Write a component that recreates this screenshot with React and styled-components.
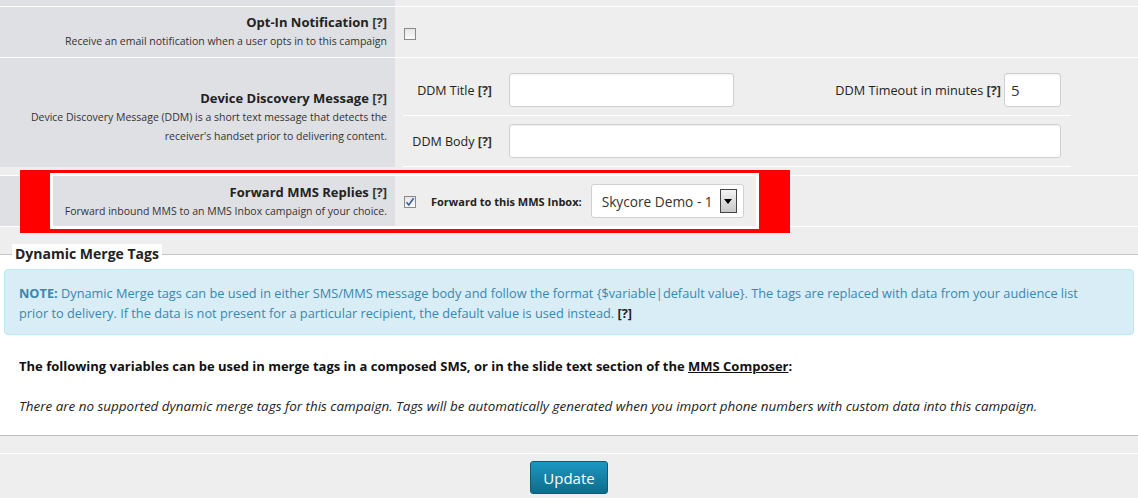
import React from "react";
import styled, { createGlobalStyle } from "styled-components";

const Global = createGlobalStyle`
  html, body { margin: 0; padding: 0; background: #eeeeee; }
  body { font-family: "Open Sans", "DejaVu Sans", sans-serif; color: #222; }
  * { box-sizing: border-box; }
`;

const Page = styled.div`
  width: 1138px;
  background: #eeeeee;
`;

const Settings = styled.div`
  display: flex;
  flex-direction: column;
`;

const Row = styled.div`
  position: relative;
  display: grid;
  grid-template-columns: 395px 1fr;
  height: ${(p) => p.$h}px;
  border-top: ${(p) => (p.$top ? "1px solid #fff" : "none")};
  border-bottom: ${(p) => (p.$bottom ? "1px solid #fff" : "none")};
`;

const LabelCell = styled.div`
  background: #dfe0e4;
  text-align: right;
  padding: ${(p) => p.$pt || 0}px 8px 0 0;
`;

const ValueCell = styled.div`
  display: flex;
  align-items: ${(p) => p.$align || "center"};
  padding-left: ${(p) => p.$pl || 9}px;
`;

const Title = styled.div`
  font-size: 13px;
  font-weight: 700;
  line-height: 20px;
  color: #222;
  white-space: nowrap;
`;

const Help = styled.span`
  font-weight: 700;
  color: #333;
`;

const Desc = styled.div`
  font-size: 10.5px;
  line-height: 19px;
  color: #333;
  white-space: nowrap;
`;

const Box = styled.span`
  display: inline-flex;
  align-items: center;
  justify-content: center;
  width: 12px;
  height: 12px;
  border: 1px solid #8a8a8a;
  background: linear-gradient(#e6e6e6, #fafafa);
  margin-top: ${(p) => p.$mt || 0}px;
`;

const Spacer = styled.div`
  height: ${(p) => p.$h}px;
`;

const InnerTable = styled.div`
  width: 668px;
  display: flex;
  flex-direction: column;
`;

const InnerRow = styled.div`
  display: grid;
  grid-template-columns: 106px 1fr;
  align-items: center;
  padding: ${(p) => p.$pt}px 10px 8px 0;
  border-bottom: 1px solid #fff;
`;

const FieldLabel = styled.div`
  text-align: right;
  padding-right: 17px;
  font-size: 12.5px;
  color: #222;
  white-space: nowrap;
`;

const FieldLine = styled.div`
  display: flex;
  align-items: center;
`;

const Input = styled.div`
  width: ${(p) => (p.$w ? `${p.$w}px` : "auto")};
  flex: ${(p) => (p.$w ? "none" : "1")};
  height: 34px;
  background: #fff;
  border: 1px solid #cfcfcf;
  border-radius: 3px;
  box-shadow: inset 0 1px 1px rgba(0, 0, 0, 0.06);
  padding: 0 6px;
  display: flex;
  align-items: center;
  font-size: 15px;
  color: #333;
`;

const Grow = styled.div`
  flex: 1;
`;

const InlineLabel = styled.span`
  font-size: 12.7px;
  color: #222;
  margin-right: 3px;
  white-space: nowrap;
`;

const Highlight = styled.div`
  position: absolute;
  left: 20px;
  top: -6px;
  width: 770px;
  height: 63px;
  border-style: solid;
  border-color: #ff0000;
  border-width: 3px 31px 4px 30px;
  box-shadow: inset 0 0 0 3px #fff;
  pointer-events: none;
`;

const ForwardLabel = styled.span`
  font-size: 11px;
  font-weight: 700;
  color: #222;
  margin: 0 9px 0 15px;
  white-space: nowrap;
`;

const Select = styled.div`
  width: 153px;
  height: 34px;
  background: #fff;
  border: 1px solid #d0d0d0;
  border-radius: 3px;
  display: flex;
  align-items: center;
  padding: 0 6px 0 10px;
  font-size: 13.7px;
  color: #333;
  justify-content: space-between;
  white-space: nowrap;
`;

const Caret = styled.span`
  flex: none;
  width: 17px;
  height: 24px;
  border: 1px solid #444;
  background: linear-gradient(#f4f4f4, #c8c8c8);
  display: flex;
  align-items: center;
  justify-content: center;
`;

const Fieldset = styled.fieldset`
  margin: 17px 0 0 0;
  padding: 5px 0 19px 0;
  border: none;
  border-top: 1px solid #c6c6c6;
  border-bottom: 1px solid #bdbdbd;
  background: #fff;
  min-width: 0;
`;

const Legend = styled.legend`
  margin-left: 12px;
  padding: 0 3px;
  background: #fff;
  font-size: 14px;
  font-weight: 700;
  line-height: 20px;
  color: #222;
`;

const Alert = styled.div`
  margin: 0 4px;
  padding: 13px 14px 11px;
  background: #d9edf7;
  border: 1px solid #bce8f1;
  border-radius: 4px;
  color: #3a87ad;
  font-size: 12.75px;
  line-height: 20px;
  white-space: nowrap;
`;

const Strong = styled.b`
  font-weight: 700;
  color: ${(p) => p.$c || "inherit"};
`;

const Lead = styled.p`
  margin: 21px 0 0 19px;
  font-size: 13px;
  font-weight: 700;
  line-height: 20px;
  color: #111;
`;

const Link = styled.a`
  color: #111;
  text-decoration: underline;
`;

const Note = styled.p`
  margin: 20px 0 0 19px;
  font-size: 13.45px;
  font-style: italic;
  line-height: 20px;
  color: #222;
`;

const FooterStrip = styled.div`
  height: 18px;
  border-bottom: 1px solid #fff;
`;

const ButtonBar = styled.div`
  display: flex;
  justify-content: center;
  padding-top: 7px;
`;

const Button = styled.button`
  width: 78px;
  height: 33px;
  border: 1px solid #0d5c77;
  border-radius: 3px;
  background: linear-gradient(#1b97c1, #0f6c8b);
  color: #fff;
  font-family: "Open Sans", sans-serif;
  font-size: 15px;
  padding: 0;
`;

const Check = () => (
  <svg width="10" height="10" viewBox="0 0 10 10">
    <path d="M1.5 5.2 L3.8 8 L8.6 1.2" fill="none" stroke="#3a5ea8" strokeWidth="1.6" />
  </svg>
);

export default function App() {
  return (
    <Page>
      <Global />
      <Settings>
        <Row $h={7} $bottom>
          <LabelCell />
          <ValueCell />
        </Row>
        <Row $h={51} $bottom>
          <LabelCell $pt={5}>
            <Title>
              Opt-In Notification <Help>[?]</Help>
            </Title>
            <Desc>Receive an email notification when a user opts in to this campaign</Desc>
          </LabelCell>
          <ValueCell>
            <Box $mt={3} />
          </ValueCell>
        </Row>
        <Row $h={109}>
          <LabelCell $pt={30}>
            <Title>
              Device Discovery Message <Help>[?]</Help>
            </Title>
            <Desc>
              Device Discovery Message (DDM) is a short text message that detects the
              <br />
              receiver's handset prior to delivering content.
            </Desc>
          </LabelCell>
          <ValueCell $align="flex-start" $pl={8}>
            <InnerTable>
              <InnerRow $pt={15}>
                <FieldLabel>
                  DDM Title <Help>[?]</Help>
                </FieldLabel>
                <FieldLine>
                  <Input $w={225} />
                  <Grow />
                  <InlineLabel>
                    DDM Timeout in minutes <Help>[?]</Help>
                  </InlineLabel>
                  <Input $w={57}>5</Input>
                </FieldLine>
              </InnerRow>
              <InnerRow $pt={8}>
                <FieldLabel>
                  DDM Body <Help>[?]</Help>
                </FieldLabel>
                <FieldLine>
                  <Input />
                </FieldLine>
              </InnerRow>
            </InnerTable>
          </ValueCell>
        </Row>
        <Spacer $h={8} />
        <Row $h={52} $top $bottom>
          <LabelCell $pt={6}>
            <Title>
              Forward MMS Replies <Help>[?]</Help>
            </Title>
            <Desc>Forward inbound MMS to an MMS Inbox campaign of your choice.</Desc>
          </LabelCell>
          <ValueCell>
            <Box $mt={2}>
              <Check />
            </Box>
            <ForwardLabel>Forward to this MMS Inbox:</ForwardLabel>
            <Select>
              Skycore Demo - 1
              <Caret>
                <svg width="8" height="5" viewBox="0 0 8 5">
                  <path d="M0 0 H8 L4 5 Z" fill="#000" />
                </svg>
              </Caret>
            </Select>
          </ValueCell>
          <Highlight />
        </Row>
      </Settings>
      <Fieldset>
        <Legend>Dynamic Merge Tags</Legend>
        <Alert>
          <Strong>NOTE:</Strong> Dynamic Merge tags can be used in either SMS/MMS message body and
          follow the format {"{$variable|default value}"}. The tags are replaced with data from your
          audience list
          <br />
          prior to delivery. If the data is not present for a particular recipient, the default value
          is used instead. <Strong $c="#222">[?]</Strong>
        </Alert>
        <Lead>
          The following variables can be used in merge tags in a composed SMS, or in the slide text
          section of the <Link>MMS Composer</Link>:
        </Lead>
        <Note>
          There are no supported dynamic merge tags for this campaign. Tags will be automatically
          generated when you import phone numbers with custom data into this campaign.
        </Note>
      </Fieldset>
      <FooterStrip />
      <ButtonBar>
        <Button>Update</Button>
      </ButtonBar>
    </Page>
  );
}
